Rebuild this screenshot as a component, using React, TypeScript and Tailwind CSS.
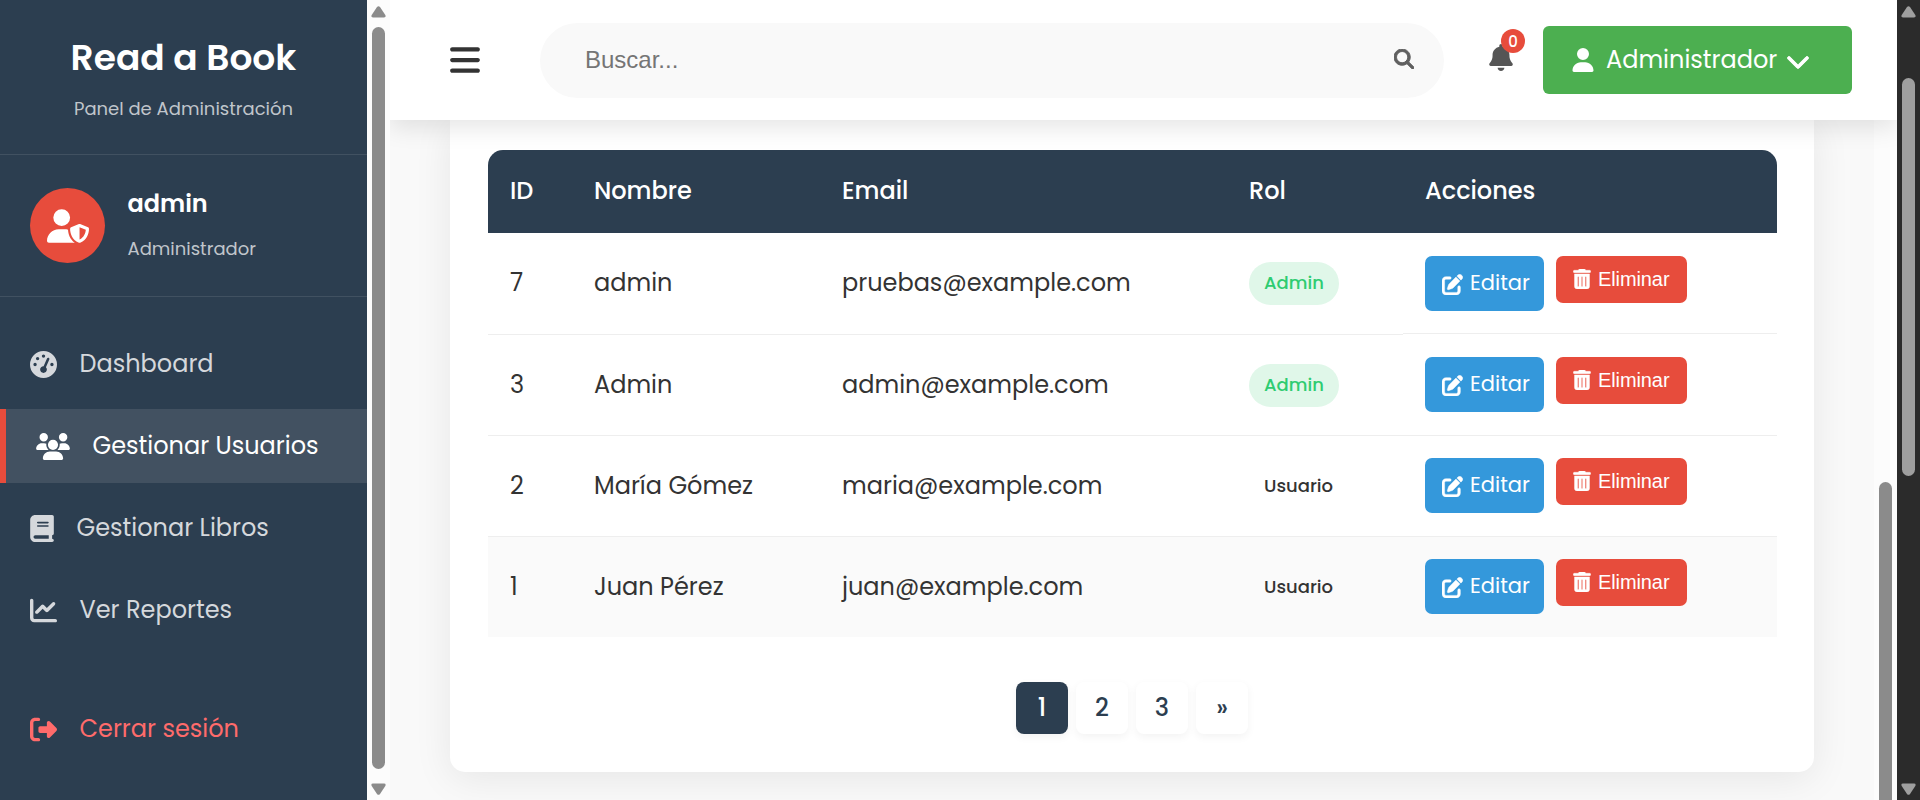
import React from "react";
import {
  FaBars,
  FaBell,
  FaBook,
  FaChartLine,
  FaChevronDown,
  FaGaugeHigh,
  FaMagnifyingGlass,
  FaPenToSquare,
  FaRightFromBracket,
  FaTrashCan,
  FaUser,
  FaUserShield,
  FaUsers,
} from "react-icons/fa6";

type User = { id: number; name: string; email: string; role: "Admin" | "Usuario" };

const users: User[] = [
  { id: 7, name: "admin", email: "pruebas@example.com", role: "Admin" },
  { id: 3, name: "Admin", email: "admin@example.com", role: "Admin" },
  { id: 2, name: "María Gómez", email: "maria@example.com", role: "Usuario" },
  { id: 1, name: "Juan Pérez", email: "juan@example.com", role: "Usuario" },
];

const columns = "grid grid-cols-[84px_248px_407px_176px_1fr]";

function Arrow({ down = false, className }: { down?: boolean; className: string }) {
  return (
    <svg viewBox="0 0 15 12" className={`h-[12px] w-[15px] ${down ? "rotate-180" : ""} ${className}`}>
      <path
        d="M6 1.1 L0.7 9 Q-0.4 11.4 2 11.4 L13 11.4 Q15.4 11.4 14.3 9 L9 1.1 Q7.5 -0.6 6 1.1 Z"
        fill="currentColor"
      />
    </svg>
  );
}

function NavItem({ icon, label, active = false }: { icon: React.ReactNode; label: string; active?: boolean }) {
  return (
    <a
      className={`flex h-[74px] items-center gap-[22.5px] text-2xl ${
        active ? "border-l-[6px] border-[#e74c3c] bg-[#425161] pl-[30px] text-white" : "pl-[30px] text-[#d5d8dc]"
      }`}
    >
      {icon}
      <span>{label}</span>
    </a>
  );
}

function Sidebar() {
  return (
    <aside className="flex w-[367px] shrink-0 flex-col bg-[#2c3e50]">
      <div className="h-[155px] border-b border-[#415161] pt-[31px] text-center">
        <h1 className="text-[36px] leading-[54px] font-semibold text-white">Read a Book</h1>
        <p className="mt-[10px] text-lg leading-[27px] text-[#c0c5cb]">Panel de Administración</p>
      </div>
      <div className="flex h-[142px] items-center gap-[22.5px] border-b border-[#415161] pl-[30px]">
        <div className="flex size-[75px] items-center justify-center rounded-full bg-[#e74c3c]">
          <FaUserShield className="h-[34px] w-[42px] text-white" />
        </div>
        <div className="pb-[3px]">
          <h2 className="text-2xl leading-[36px] font-semibold text-white">admin</h2>
          <p className="mt-[13px] text-lg leading-[27px] text-[#c0c5cb]">Administrador</p>
        </div>
      </div>
      <nav className="flex flex-col gap-2 pt-[30px]">
        <NavItem icon={<FaGaugeHigh className="size-[27px]" />} label="Dashboard" />
        <NavItem icon={<FaUsers className="h-[27px] w-[34px]" />} label="Gestionar Usuarios" active />
        <NavItem icon={<FaBook className="h-[27px] w-[24px]" />} label="Gestionar Libros" />
        <NavItem icon={<FaChartLine className="size-[27px]" />} label="Ver Reportes" />
      </nav>
      <a className="mt-[45px] flex h-[74px] items-center gap-[22.5px] pl-[30px] text-2xl text-[#ff6b6b]">
        <FaRightFromBracket className="size-[27px]" />
        <span>Cerrar sesión</span>
      </a>
    </aside>
  );
}

function Topbar() {
  return (
    <header className="relative z-10 flex h-[120px] shrink-0 items-center bg-white pr-[45px] pl-[60px] shadow-[0_7.5px_22.5px_rgba(0,0,0,0.1)]">
      <FaBars className="h-[34px] w-[30px] text-[#333333]" />
      <div className="ml-[60px] flex h-[75px] w-[904px] items-center justify-between rounded-full bg-[#f9f9f9] pr-[30px] pl-[45px]">
        <span className="font-['Liberation_Sans',Arial,sans-serif] text-2xl text-[#757575]">Buscar...</span>
        <FaMagnifyingGlass className="size-[20px] -translate-y-px stroke-[#606060] stroke-[24] text-[#606060]" />
      </div>
      <div className="relative ml-[45px] flex h-[60px] w-[24px] items-center">
        <FaBell className="h-[27px] w-[24px] -translate-y-[3px] text-[#555555]" />
        <span className="absolute top-[-1px] left-[12px] flex size-[24px] items-center justify-center rounded-full bg-[#e74c3c] text-[15px] leading-none font-medium text-white">
          0
        </span>
      </div>
      <button className="ml-auto flex h-[68px] w-[309px] items-center rounded-[6px] bg-[#4caf50] pl-[29px] text-2xl text-white">
        <FaUser className="h-[24px] w-[22px]" />
        <span className="ml-[12px]">Administrador</span>
        <FaChevronDown className="ml-[9px] h-[24px] w-[24px] translate-y-[1px] stroke-white stroke-[20]" />
      </button>
    </header>
  );
}

function RoleBadge({ role }: { role: User["role"] }) {
  return (
    <span
      className={`flex h-[43px] items-center rounded-full px-[15px] pb-px text-lg font-medium ${
        role === "Admin" ? "bg-[#e0f7e9] text-[#2ecc71]" : "text-[#333333]"
      }`}
    >
      {role}
    </span>
  );
}

function UserRow({ user, index }: { user: User; index: number }) {
  const last = index === users.length - 1;
  const height = index === 0 ? "h-[102px]" : last ? "h-[100px]" : "h-[101px]";
  const line = last ? "" : "border-b border-[#eeeeee]";
  const cell = `flex items-center pl-[22px] pb-px ${line}`;
  return (
    <div className={`${columns} ${height} text-2xl text-[#333333] ${last ? "bg-[#fafafa]" : ""}`}>
      <div className={cell}>{user.id}</div>
      <div className={cell}>{user.name}</div>
      <div className={cell}>{user.email}</div>
      <div className={`flex items-center pl-[22px] ${line}`}>
        <RoleBadge role={user.role} />
      </div>
      <div
        className={`flex items-start gap-[12px] self-start pl-[22px] ${last ? "h-[100px]" : "h-[101px]"} ${
          index === 0 ? "pt-[23px]" : "pt-[22px]"
        } ${line}`}
      >
        <a className="flex h-[55px] w-[119px] items-center rounded-[7px] bg-[#3498db] pb-px pl-[17px] text-[21px] text-white">
          <FaPenToSquare className="size-[21px] translate-y-px stroke-white stroke-[10]" />
          <span className="ml-[7px]">Editar</span>
        </a>
        <button className="flex h-[47px] w-[131px] items-center rounded-[7px] bg-[#e74c3c] pb-[2px] pl-[17px] font-['Liberation_Sans',Arial,sans-serif] text-xl tracking-[-0.1px] text-white">
          <FaTrashCan className="h-[20px] w-[18px] stroke-white stroke-[10]" />
          <span className="ml-[7px]">Eliminar</span>
        </button>
      </div>
    </div>
  );
}

function Pagination() {
  return (
    <div className="mt-[45px] flex justify-center gap-2">
      {["1", "2", "3", "»"].map((label, i) => (
        <a
          key={label}
          className={`flex size-[52px] items-center justify-center rounded-[8px] pb-px text-2xl font-medium shadow-[0_3px_8px_rgba(0,0,0,0.05)] ${
            i === 0 ? "bg-[#2c3e50] text-white" : "bg-white text-[#2c3e50]"
          }`}
        >
          {label}
        </a>
      ))}
    </div>
  );
}

export default function App() {
  return (
    <div className="flex h-[800px] w-[1920px] overflow-hidden bg-[#f9f9f9] font-['Poppins',Inter,sans-serif]">
      <Sidebar />
      <div className="flex w-[23px] shrink-0 flex-col items-center bg-[#fcfcfc] pt-[6px] text-[#8b8b8b]">
        <Arrow className="" />
        <div className="mt-[9px] h-[742px] w-[13px] rounded-full bg-[#8b8b8b]" />
        <Arrow down className="mt-[14px]" />
      </div>
      <div className="flex w-[1507px] shrink-0 flex-col overflow-hidden">
        <Topbar />
        <div className="flex min-h-0 flex-1">
          <main className="flex-1 overflow-hidden pl-[60px]">
            <section className="h-[652px] w-[1364px] rounded-b-[15px] bg-white px-[38px] pt-[30px] shadow-[0_7px_38px_rgba(0,0,0,0.08)]">
              <div className="w-[1289px]">
                <div
                  className={`${columns} h-[83px] items-center rounded-t-[15px] bg-[#2c3e50] pb-px text-2xl font-medium text-white *:pl-[22px]`}
                >
                  <div>ID</div>
                  <div>Nombre</div>
                  <div>Email</div>
                  <div>Rol</div>
                  <div>Acciones</div>
                </div>
                {users.map((user, i) => (
                  <UserRow key={user.id} user={user} index={i} />
                ))}
              </div>
              <Pagination />
            </section>
          </main>
          <div className="w-[23px] shrink-0 overflow-hidden bg-[#fcfcfc] pt-[362px] pl-[5px]">
            <div className="h-[400px] w-[13px] rounded-full bg-[#8b8b8b]" />
          </div>
        </div>
      </div>
      <div className="relative z-20 flex w-[23px] shrink-0 flex-col items-center bg-[#2b2b2b] pt-[6px] text-[#9f9f9f]">
        <Arrow className="" />
        <div className="mt-[60px] h-[398px] w-[13px] rounded-full bg-[#9f9f9f]" />
        <Arrow down className="mt-[307px]" />
      </div>
    </div>
  );
}
